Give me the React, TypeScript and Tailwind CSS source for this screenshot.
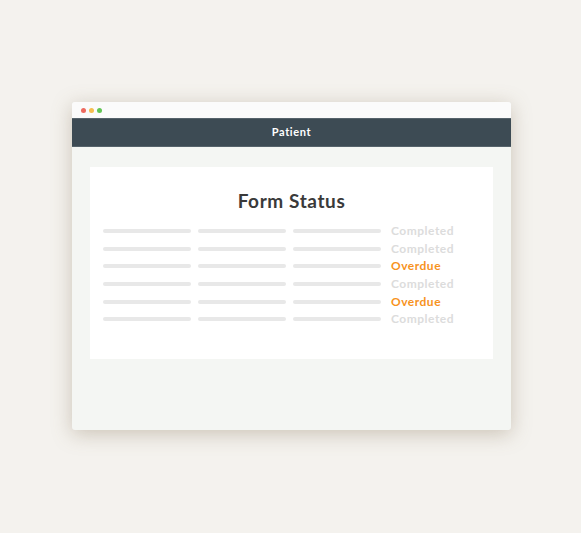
const rows = [
  { status: 'Completed', overdue: false },
  { status: 'Completed', overdue: false },
  { status: 'Overdue', overdue: true },
  { status: 'Completed', overdue: false },
  { status: 'Overdue', overdue: true },
  { status: 'Completed', overdue: false },
];

export default function App() {
  return (
    <div
      className="w-[581px] h-[533px] bg-[#f4f2ee] pt-[102px] pl-[72px]"
      style={{ fontFamily: 'Lato, "Open Sans", sans-serif' }}
    >
      <div className="w-[439px] h-[328px] rounded-[3px] bg-[#f4f6f3] flex flex-col overflow-hidden shadow-[0_4px_20px_rgba(130,110,80,0.35)]">
        {/* window chrome */}
        <div className="h-[16px] bg-[#fbfbfb] flex items-center gap-[3px] pl-[9px]">
          <span className="w-[5px] h-[5px] rounded-full bg-[#ee6a5f]" />
          <span className="w-[5px] h-[5px] rounded-full bg-[#f5be4f]" />
          <span className="w-[5px] h-[5px] rounded-full bg-[#62c554]" />
        </div>
        <div className="h-[29px] bg-[#3d4b54] border-y border-[#56636b] flex items-center justify-center">
          <span className="text-white text-[11px] font-bold tracking-[0.6px]">Patient</span>
        </div>

        <div className="px-[18px] pt-[20px]">
          <div className="bg-white h-[192px] pt-[23px] px-[13px]">
            <h1 className="text-center text-[19px] font-bold text-[#3a3a3a] leading-[22px] tracking-[0.6px]">
              Form Status
            </h1>
            <div className="mt-[10.5px] flex flex-col">
              {rows.map((r, i) => (
                <div key={i} className="h-[17.6px] flex items-center">
                  <div className="w-[88px] h-[4px] rounded-full bg-[#e8e8e8]" />
                  <div className="w-[88px] h-[4px] rounded-full bg-[#e8e8e8] ml-[7px]" />
                  <div className="w-[88px] h-[4px] rounded-full bg-[#e8e8e8] ml-[7px]" />
                  <span
                    className={
                      'ml-[10px] text-[12px] font-bold tracking-[0.5px] ' +
                      (r.overdue ? 'text-[#f7931e]' : 'text-[#dcdcdc]')
                    }
                  >
                    {r.status}
                  </span>
                </div>
              ))}
            </div>
          </div>
        </div>
      </div>
    </div>
  );
}
